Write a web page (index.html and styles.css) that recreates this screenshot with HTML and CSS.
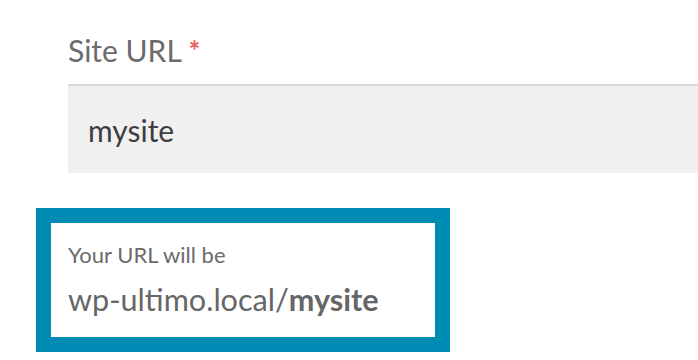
FILE: index.html
```html
<!DOCTYPE html>
<html lang="en">
<head>
  <meta charset="UTF-8" />
  <meta name="viewport" content="width=device-width, initial-scale=1.0" />
  <title>Site URL</title>
  <link rel="stylesheet" href="styles.css">
</head>
<body>
  <div class="field">
    <label class="field-label" for="site-url">Site URL <span class="required">*</span></label>
    <input type="text" id="site-url" class="field-input" value="mysite" />
  </div>

  <div class="preview">
    <p class="preview-caption">Your URL will be</p>
    <p class="preview-url">wp-ultimo.local/<strong>mysite</strong></p>
  </div>
</body>
</html>
```

FILE: styles.css
```css
body {
  margin: 0;
  font-family: 'Lato', 'Open Sans', sans-serif;
  background-color: #ffffff;
  color: #666666;
  width: 698px;
  height: 360px;
  overflow: hidden;
}
.field {
  padding: 30px 0 0 68px;
}
.field-label {
  display: block;
  font-size: 30px;
  line-height: 40px;
  color: #6b6b6b;
  margin-bottom: 14px;
}
.required {
  color: #ea5f5f;
  font-size: 28px;
  font-weight: 700;
  vertical-align: top;
}
.field-input {
  display: block;
  box-sizing: border-box;
  width: 100%;
  height: 89px;
  margin: 0;
  padding: 0 20px;
  border: none;
  border-top: 2px solid #d9d9d9;
  background-color: #f0f0f0;
  font-family: inherit;
  font-size: 30px;
  color: #3d3d42;
  outline: none;
}
.preview {
  width: 384px;
  height: 114px;
  margin: 35px 0 0 36px;
  border: 15px solid #008bb5;
  box-sizing: content-box;
  padding: 0;
}
.preview-caption {
  margin: 0;
  padding: 17px 0 0 17px;
  font-size: 22px;
  line-height: 30px;
  color: #6b6b6b;
}
.preview-url {
  margin: 0;
  padding: 10px 0 0 17px;
  font-size: 30.6px;
  line-height: 40px;
  color: #666666;
}
.preview-url strong {
  font-weight: 700;
}
```
